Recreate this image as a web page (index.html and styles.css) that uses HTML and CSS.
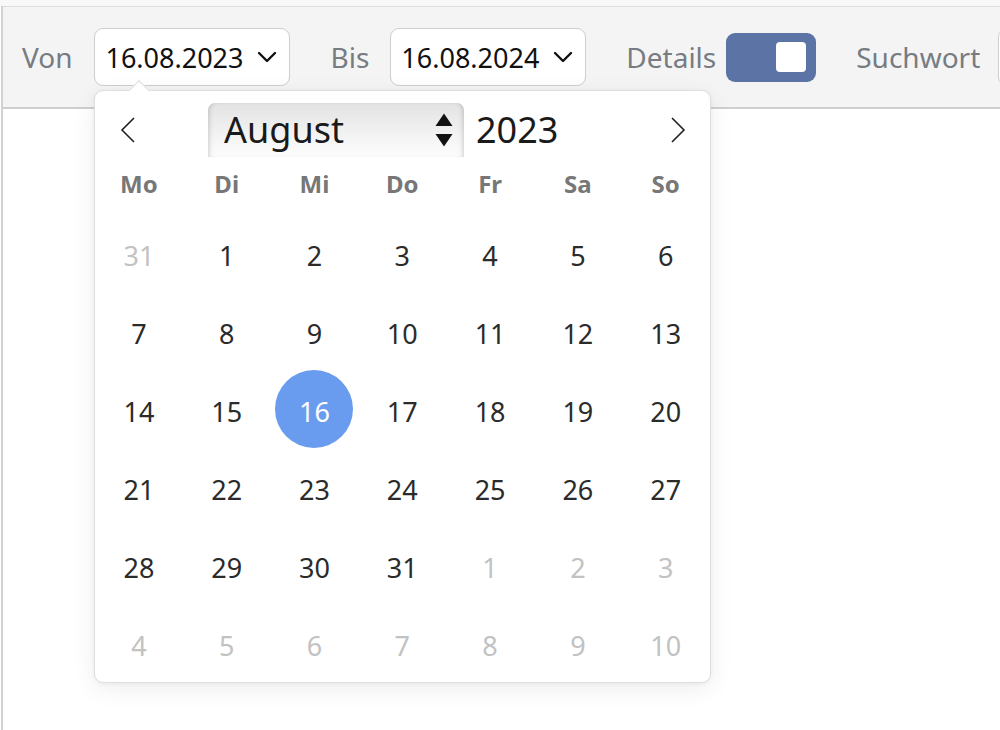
FILE: index.html
```html
<!DOCTYPE html>
<html lang="de">
<head>
<meta charset="utf-8">
<title>Zeitraum</title>
<link rel="stylesheet" href="styles.css">
</head>
<body>
<div class="top-strip"></div>
<div class="main">
  <div class="toolbar">
    <span class="label lbl-von">Von</span>
    <div class="date-input">
      <span class="date-text">16.08.2023</span>
      <svg class="chev" width="20" height="12" viewBox="0 0 20 12"><path d="M2 2 L10 10 L18 2" fill="none" stroke="#111" stroke-width="2.4" stroke-linecap="round" stroke-linejoin="round"/></svg>
    </div>
    <span class="label lbl-bis">Bis</span>
    <div class="date-input">
      <span class="date-text">16.08.2024</span>
      <svg class="chev" width="20" height="12" viewBox="0 0 20 12"><path d="M2 2 L10 10 L18 2" fill="none" stroke="#111" stroke-width="2.4" stroke-linecap="round" stroke-linejoin="round"/></svg>
    </div>
    <span class="label lbl-details">Details</span>
    <div class="toggle"><div class="knob"></div></div>
    <span class="label lbl-such">Suchwort</span>
    <div class="search-input"></div>
  </div>

  <div class="popup">
    <div class="pointer"></div>
    <div class="nav">
      <div class="nav-btn prev">
        <svg width="16" height="26" viewBox="0 0 16 26"><path d="M14 1 L2 13 L14 25" fill="none" stroke="#222" stroke-width="1.6"/></svg>
      </div>
      <div class="month-select">
        <span class="month-text">August</span>
        <svg class="updown" width="18" height="34" viewBox="0 0 18 34"><path d="M9 0.5 L17.5 13 L0.5 13 Z" fill="#111"/><path d="M0.5 21 L17.5 21 L9 33.5 Z" fill="#111"/></svg>
      </div>
      <span class="year">2023</span>
      <div class="nav-btn next">
        <svg width="16" height="26" viewBox="0 0 16 26"><path d="M2 1 L14 13 L2 25" fill="none" stroke="#222" stroke-width="1.6"/></svg>
      </div>
    </div>
    <div class="weekdays">
      <span>Mo</span><span>Di</span><span>Mi</span><span>Do</span><span>Fr</span><span>Sa</span><span>So</span>
    </div>
    <div class="days">
      <div class="day muted"><span>31</span></div>
      <div class="day"><span>1</span></div>
      <div class="day"><span>2</span></div>
      <div class="day"><span>3</span></div>
      <div class="day"><span>4</span></div>
      <div class="day"><span>5</span></div>
      <div class="day"><span>6</span></div>

      <div class="day"><span>7</span></div>
      <div class="day"><span>8</span></div>
      <div class="day"><span>9</span></div>
      <div class="day"><span>10</span></div>
      <div class="day"><span>11</span></div>
      <div class="day"><span>12</span></div>
      <div class="day"><span>13</span></div>

      <div class="day"><span>14</span></div>
      <div class="day"><span>15</span></div>
      <div class="day selected"><span>16</span></div>
      <div class="day"><span>17</span></div>
      <div class="day"><span>18</span></div>
      <div class="day"><span>19</span></div>
      <div class="day"><span>20</span></div>

      <div class="day"><span>21</span></div>
      <div class="day"><span>22</span></div>
      <div class="day"><span>23</span></div>
      <div class="day"><span>24</span></div>
      <div class="day"><span>25</span></div>
      <div class="day"><span>26</span></div>
      <div class="day"><span>27</span></div>

      <div class="day"><span>28</span></div>
      <div class="day"><span>29</span></div>
      <div class="day"><span>30</span></div>
      <div class="day"><span>31</span></div>
      <div class="day muted"><span>1</span></div>
      <div class="day muted"><span>2</span></div>
      <div class="day muted"><span>3</span></div>

      <div class="day muted"><span>4</span></div>
      <div class="day muted"><span>5</span></div>
      <div class="day muted"><span>6</span></div>
      <div class="day muted"><span>7</span></div>
      <div class="day muted"><span>8</span></div>
      <div class="day muted"><span>9</span></div>
      <div class="day muted"><span>10</span></div>
    </div>
  </div>
</div>
</body>
</html>
```

FILE: styles.css
```css
* { box-sizing: border-box; }

html, body {
  margin: 0;
  padding: 0;
  background: #fff;
  font-family: "Noto Sans", "Open Sans", "DejaVu Sans", sans-serif;
  overflow: hidden;
}

.top-strip {
  height: 6px;
  background: #f8f8f9;
}

.main {
  position: relative;
  margin-left: 1px;
  border-left: 2px solid #d2d2d2;
  height: 724px;
}

.toolbar {
  height: 103px;
  background: #f4f4f4;
  border-top: 1px solid #dcdcdc;
  border-bottom: 2px solid #cfcfcf;
  display: flex;
  align-items: center;
  padding-left: 19px;
  white-space: nowrap;
  overflow: hidden;
}

.toolbar > * { flex-shrink: 0; }

.label {
  font-size: 28px;
  color: #767c82;
}

.lbl-von { margin-right: 22px; }
.lbl-bis { margin-left: 40px; margin-right: 21px; }
.lbl-details { margin-left: 40px; margin-right: 10px; }
.lbl-such { margin-left: 40px; margin-right: 18px; }

.date-input {
  width: 196px;
  height: 58px;
  background: #fff;
  border: 1px solid #cdcdcd;
  border-radius: 9px;
  display: flex;
  align-items: center;
  padding: 0 12px 0 10px;
}

.date-text {
  font-size: 27px;
  color: #111;
  flex: 1;
}

.chev { display: block; flex-shrink: 0; }

.toggle {
  width: 90px;
  height: 49px;
  background: #5b74a5;
  border-radius: 9px;
  display: flex;
  align-items: center;
  justify-content: flex-end;
  padding-right: 10px;
}

.knob {
  width: 30px;
  height: 30px;
  background: #fff;
  border-radius: 4px;
}

.search-input {
  width: 60px;
  height: 58px;
  background: #fff;
  border: 1px solid #cdcdcd;
  border-radius: 9px;
}

/* Popup calendar */
.popup {
  position: absolute;
  left: 91px;
  top: 84px;
  width: 617px;
  background: #fff;
  border: 1px solid #dedede;
  border-radius: 9px;
  box-shadow: 0 6px 24px rgba(0, 0, 0, 0.07), 0 1px 4px rgba(0, 0, 0, 0.05);
}

.pointer {
  position: absolute;
  left: 37px;
  top: -8px;
  width: 14px;
  height: 14px;
  background: #fff;
  border-left: 1px solid #dedede;
  border-top: 1px solid #dedede;
  transform: rotate(45deg);
}

.nav {
  display: flex;
  align-items: center;
  height: 66px;
  padding-top: 12px;
}

.nav-btn {
  width: 64px;
  height: 54px;
  display: flex;
  align-items: center;
  justify-content: center;
}

.prev { margin-left: 1px; }

.month-select {
  margin-left: 48px;
  width: 256px;
  height: 54px;
  border-radius: 7px 7px 0 0;
  background: linear-gradient(#e3e3e3, #efefef 45%, #fdfdfd 100%);
  box-shadow: inset 4px 0 5px -3px rgba(0, 0, 0, 0.18), inset -4px 0 5px -3px rgba(0, 0, 0, 0.18);
  display: flex;
  align-items: center;
  padding: 0 11px 0 16px;
}

.month-text {
  flex: 1;
  font-size: 36px;
  color: #1a1a1a;
  line-height: 1;
}

.updown { display: block; }

.year {
  margin-left: 12px;
  font-size: 36px;
  color: #1a1a1a;
  line-height: 1;
}

.next { margin-left: auto; }

.weekdays {
  display: grid;
  grid-template-columns: repeat(7, 87.8px);
  height: 57px;
  padding-bottom: 4px;
  align-items: center;
  justify-items: center;
  font-size: 24px;
  font-weight: 700;
  color: #777;
}

.days {
  display: grid;
  grid-template-columns: repeat(7, 87.8px);
  grid-auto-rows: 78px;
}

.day {
  display: flex;
  align-items: center;
  justify-content: center;
}

.day span {
  width: 78px;
  height: 78px;
  border-radius: 50%;
  display: flex;
  align-items: center;
  justify-content: center;
  padding-top: 5px;
  font-size: 27px;
  color: #2b2b2b;
}

.day.muted span { color: #c2c2c2; }

.day.selected span {
  background: #699cef;
  color: #fff;
}
```
